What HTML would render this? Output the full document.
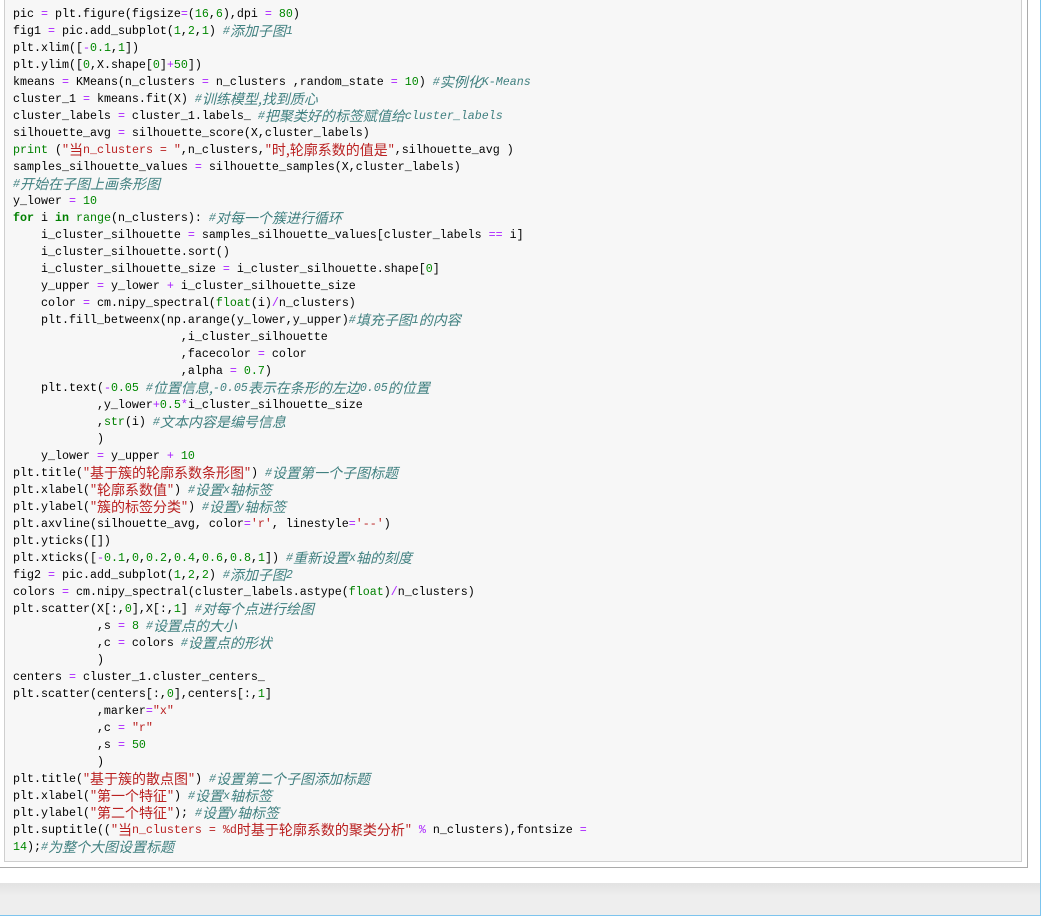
<!DOCTYPE html>
<html><head><meta charset="utf-8">
<style>
html,body{margin:0;padding:0;}
body{width:1041px;height:916px;position:relative;overflow:hidden;background:#fff;font-family:"Liberation Mono","Noto Sans CJK SC",monospace;}
.outer{position:absolute;left:-10px;top:-10px;width:1036px;height:876px;border:1px solid #aaa;background:#fff;}
.cell{position:absolute;left:4px;top:-5px;width:1016px;height:865px;border:1px solid #cfcfcf;background:#f7f7f7;}
.code{position:absolute;left:13px;top:6px;font-size:11.67px;color:#000;}
.code div{height:17px;line-height:17px;white-space:pre;overflow:visible;}
.k{color:#008000;font-weight:bold}
.b{color:#008000}
.n{color:#008800}
.o{color:#AA22FF}
.s{color:#BA2121}
.c{color:#408080;font-style:italic}
.z{font-size:14px;font-family:"Noto Sans CJK SC","WenQuanYi Zen Hei",sans-serif;line-height:17px;vertical-align:top}
.bot{position:absolute;left:0;top:883px;width:1040px;height:32px;background:linear-gradient(#e2e2e2,#eeeeee 40%);}
.bl{position:absolute;left:0;top:915px;width:1041px;height:1px;background:#7cc4ee;}
.br{position:absolute;left:1040px;top:0;width:1px;height:916px;background:#7cc4ee;}
</style></head><body>
<div class="outer"></div>
<div class="cell"></div>
<div class="code"><div>pic <span class="o">=</span> plt.figure(figsize<span class="o">=</span>(<span class="n">16</span>,<span class="n">6</span>),dpi <span class="o">=</span> <span class="n">80</span>)</div><div>fig1 <span class="o">=</span> pic.add_subplot(<span class="n">1</span>,<span class="n">2</span>,<span class="n">1</span>) <span class="c">#<span class="z">添加子图</span>1</span></div><div>plt.xlim([<span class="o">-</span><span class="n">0.1</span>,<span class="n">1</span>])</div><div>plt.ylim([<span class="n">0</span>,X.shape[<span class="n">0</span>]<span class="o">+</span><span class="n">50</span>])</div><div>kmeans <span class="o">=</span> KMeans(n_clusters <span class="o">=</span> n_clusters ,random_state <span class="o">=</span> <span class="n">10</span>) <span class="c">#<span class="z">实例化</span>K-Means</span></div><div>cluster_1 <span class="o">=</span> kmeans.fit(X) <span class="c">#<span class="z">训练模型,找到质心</span></span></div><div>cluster_labels <span class="o">=</span> cluster_1.labels_ <span class="c">#<span class="z">把聚类好的标签赋值给</span>cluster_labels</span></div><div>silhouette_avg <span class="o">=</span> silhouette_score(X,cluster_labels)</div><div><span class="b">print</span> (<span class="s">"<span class="z">当</span>n_clusters = "</span>,n_clusters,<span class="s">"<span class="z">时,轮廓系数的值是</span>"</span>,silhouette_avg )</div><div>samples_silhouette_values <span class="o">=</span> silhouette_samples(X,cluster_labels)</div><div><span class="c">#<span class="z">开始在子图上画条形图</span></span></div><div>y_lower <span class="o">=</span> <span class="n">10</span></div><div><span class="k">for</span> i <span class="k">in</span> <span class="b">range</span>(n_clusters): <span class="c">#<span class="z">对每一个簇进行循环</span></span></div><div>    i_cluster_silhouette <span class="o">=</span> samples_silhouette_values[cluster_labels <span class="o">==</span> i]</div><div>    i_cluster_silhouette.sort()</div><div>    i_cluster_silhouette_size <span class="o">=</span> i_cluster_silhouette.shape[<span class="n">0</span>]</div><div>    y_upper <span class="o">=</span> y_lower <span class="o">+</span> i_cluster_silhouette_size</div><div>    color <span class="o">=</span> cm.nipy_spectral(<span class="b">float</span>(i)<span class="o">/</span>n_clusters)</div><div>    plt.fill_betweenx(np.arange(y_lower,y_upper)<span class="c">#<span class="z">填充子图</span>1<span class="z">的内容</span></span></div><div>                        ,i_cluster_silhouette</div><div>                        ,facecolor <span class="o">=</span> color</div><div>                        ,alpha <span class="o">=</span> <span class="n">0.7</span>)</div><div>    plt.text(<span class="o">-</span><span class="n">0.05</span> <span class="c">#<span class="z">位置信息,</span>-0.05<span class="z">表示在条形的左边</span>0.05<span class="z">的位置</span></span></div><div>            ,y_lower<span class="o">+</span><span class="n">0.5</span><span class="o">*</span>i_cluster_silhouette_size</div><div>            ,<span class="b">str</span>(i) <span class="c">#<span class="z">文本内容是编号信息</span></span></div><div>            )</div><div>    y_lower <span class="o">=</span> y_upper <span class="o">+</span> <span class="n">10</span></div><div>plt.title(<span class="s">"<span class="z">基于簇的轮廓系数条形图</span>"</span>) <span class="c">#<span class="z">设置第一个子图标题</span></span></div><div>plt.xlabel(<span class="s">"<span class="z">轮廓系数值</span>"</span>) <span class="c">#<span class="z">设置</span>x<span class="z">轴标签</span></span></div><div>plt.ylabel(<span class="s">"<span class="z">簇的标签分类</span>"</span>) <span class="c">#<span class="z">设置</span>y<span class="z">轴标签</span></span></div><div>plt.axvline(silhouette_avg, color<span class="o">=</span><span class="s">'r'</span>, linestyle<span class="o">=</span><span class="s">'--'</span>)</div><div>plt.yticks([])</div><div>plt.xticks([<span class="o">-</span><span class="n">0.1</span>,<span class="n">0</span>,<span class="n">0.2</span>,<span class="n">0.4</span>,<span class="n">0.6</span>,<span class="n">0.8</span>,<span class="n">1</span>]) <span class="c">#<span class="z">重新设置</span>x<span class="z">轴的刻度</span></span></div><div>fig2 <span class="o">=</span> pic.add_subplot(<span class="n">1</span>,<span class="n">2</span>,<span class="n">2</span>) <span class="c">#<span class="z">添加子图</span>2</span></div><div>colors <span class="o">=</span> cm.nipy_spectral(cluster_labels.astype(<span class="b">float</span>)<span class="o">/</span>n_clusters)</div><div>plt.scatter(X[:,<span class="n">0</span>],X[:,<span class="n">1</span>] <span class="c">#<span class="z">对每个点进行绘图</span></span></div><div>            ,s <span class="o">=</span> <span class="n">8</span> <span class="c">#<span class="z">设置点的大小</span></span></div><div>            ,c <span class="o">=</span> colors <span class="c">#<span class="z">设置点的形状</span></span></div><div>            )</div><div>centers <span class="o">=</span> cluster_1.cluster_centers_</div><div>plt.scatter(centers[:,<span class="n">0</span>],centers[:,<span class="n">1</span>]</div><div>            ,marker<span class="o">=</span><span class="s">"x"</span></div><div>            ,c <span class="o">=</span> <span class="s">"r"</span></div><div>            ,s <span class="o">=</span> <span class="n">50</span></div><div>            )</div><div>plt.title(<span class="s">"<span class="z">基于簇的散点图</span>"</span>) <span class="c">#<span class="z">设置第二个子图添加标题</span></span></div><div>plt.xlabel(<span class="s">"<span class="z">第一个特征</span>"</span>) <span class="c">#<span class="z">设置</span>x<span class="z">轴标签</span></span></div><div>plt.ylabel(<span class="s">"<span class="z">第二个特征</span>"</span>); <span class="c">#<span class="z">设置</span>y<span class="z">轴标签</span></span></div><div>plt.suptitle((<span class="s">"<span class="z">当</span>n_clusters = %d<span class="z">时基于轮廓系数的聚类分析</span>"</span> <span class="o">%</span> n_clusters),fontsize <span class="o">=</span></div><div><span class="n">14</span>);<span class="c">#<span class="z">为整个大图设置标题</span></span></div></div>
<div class="bot"></div>
<div class="br"></div>
<div class="bl"></div>
</body></html>
